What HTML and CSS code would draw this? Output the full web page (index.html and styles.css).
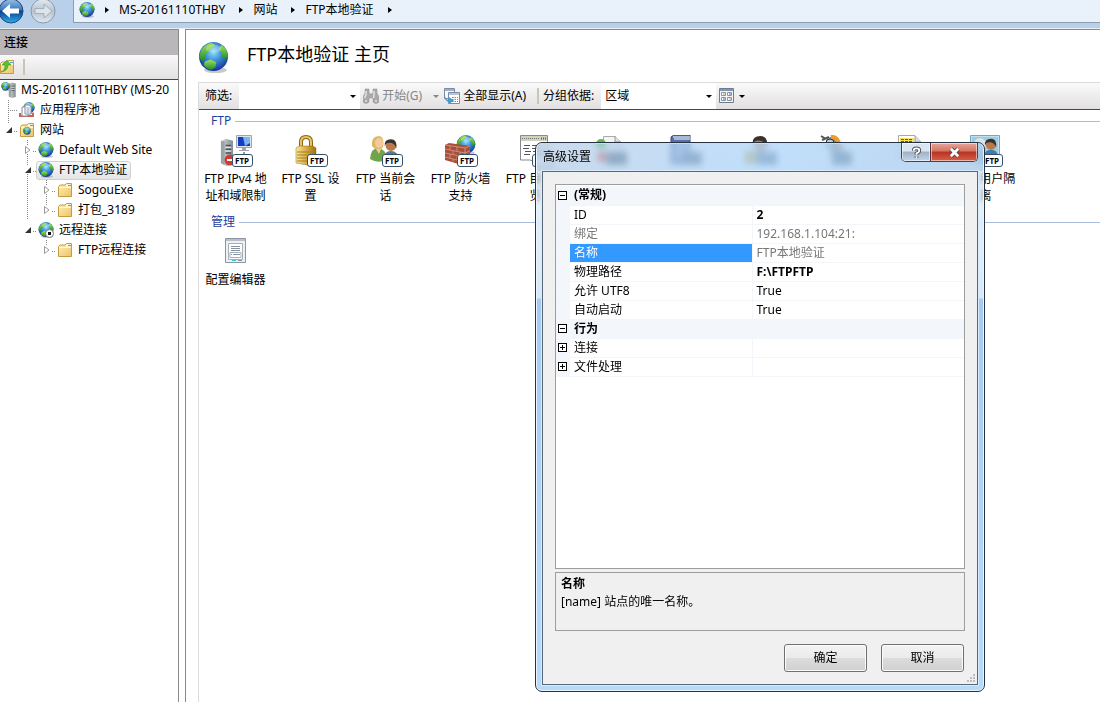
FILE: index.html
```html
<!DOCTYPE html>
<html lang="zh-CN">
<head>
    <meta charset="UTF-8">
    <meta name="viewport" content="width=device-width, initial-scale=1.0">
    <title>FTP本地验证 主页</title>
    <link rel="stylesheet" href="styles.css">
</head>
<body>
    <!-- Shared icons -->
    <svg class="sprite" aria-hidden="true">
        <defs>
            <radialGradient id="sea" cx="50%" cy="35%" r="65%">
                <stop offset="0" stop-color="#8fe0fa"/>
                <stop offset="0.45" stop-color="#3b8fd8"/>
                <stop offset="1" stop-color="#142f98"/>
            </radialGradient>
            <linearGradient id="leaf" x1="0" y1="0" x2="0" y2="1">
                <stop offset="0" stop-color="#a0e35a"/>
                <stop offset="1" stop-color="#1c8a2c"/>
            </linearGradient>
            <linearGradient id="paper" x1="0" y1="0" x2="1" y2="1">
                <stop offset="0" stop-color="#fff0b8"/>
                <stop offset="1" stop-color="#ecc466"/>
            </linearGradient>
            <linearGradient id="steel" x1="0" y1="0" x2="1" y2="0">
                <stop offset="0" stop-color="#d4dada"/>
                <stop offset="1" stop-color="#838c90"/>
            </linearGradient>
            <linearGradient id="gold" x1="0" y1="0" x2="1" y2="0">
                <stop offset="0" stop-color="#fbe9a0"/>
                <stop offset="0.6" stop-color="#d0a136"/>
                <stop offset="1" stop-color="#9c6f14"/>
            </linearGradient>
            <linearGradient id="blue-ball" x1="0" y1="0" x2="0" y2="1">
                <stop offset="0" stop-color="#9cc0e4"/>
                <stop offset="0.45" stop-color="#3a78bd"/>
                <stop offset="0.5" stop-color="#0d3f8e"/>
                <stop offset="1" stop-color="#27b2ee"/>
            </linearGradient>
            <linearGradient id="gray-ball" x1="0" y1="0" x2="0" y2="1">
                <stop offset="0" stop-color="#e4eaf1"/>
                <stop offset="0.5" stop-color="#b7c3d1"/>
                <stop offset="1" stop-color="#dfe9f3"/>
            </linearGradient>
        </defs>
        <symbol id="globe" viewBox="0 0 32 32">
            <ellipse cx="18" cy="29" rx="12" ry="3" fill="#777" opacity="0.4"/>
            <circle cx="16" cy="15" r="15" fill="url(#sea)"/>
            <path d="M3 9Q7 2 14 1L18 3L14 6L12 10L7 12L8 17L5 20L1 16Z" fill="url(#leaf)"/>
            <path d="M24 3Q31 8 31 15L28 18L24 15L25 11L21 8Z" fill="url(#leaf)"/>
            <path d="M7 20L13 18L19 21L18 26L14 29Q9 28 6 24Z" fill="url(#leaf)"/>
            <ellipse cx="16" cy="7" rx="8" ry="4" fill="#fff" opacity="0.25"/>
        </symbol>
        <symbol id="folder" viewBox="0 0 16 16">
            <path d="M1.500 14.500V4.500L3 3H8L9.500 1.500H14.500V14.500Z" fill="url(#paper)" stroke="#c69c42"/>
            <path d="M9 3.500H14" stroke="#fff" stroke-width="2"/>
            <path d="M11 3.500H14" stroke="#5ba4da"/>
            <path d="M2 5.500H14" stroke="#fff6d2"/>
        </symbol>
        <symbol id="server" viewBox="0 0 14 30">
            <path d="M1 3L7 1L14 3V28L7 30L1 27Z" fill="url(#steel)"/>
            <path d="M1 3L5 4V29L1 27Z" fill="#9aa3a6"/>
            <path d="M6 8H12M6 12H12M6 16H12" stroke="#4c5356" stroke-width="1.500"/>
            <path d="M6 10H12M6 14H12" stroke="#f4f6f6"/>
            <circle cx="9" cy="22" r="1" fill="#62dc5a"/>
        </symbol>
        <symbol id="open" viewBox="0 0 8 8"><path d="M7 1V7H1Z" fill="#333"/></symbol>
        <symbol id="closed" viewBox="0 0 8 8"><path d="M1.500 0.500V7.500L6 4Z" fill="#fff" stroke="#9a9a9a"/></symbol>
        <symbol id="person" viewBox="0 0 20 26">
            <path d="M1 24Q2 14 10 14Q18 14 19 24Q10 28 1 24Z"/>
            <circle cx="10" cy="8" r="6" fill="#b9794b"/>
            <path d="M3 9Q2 1 10 1Q17 1 16 11Q14 5 8 5Q4 5 3 9Z" fill="#38312d"/>
        </symbol>
    </svg>

    <!-- Address bar -->
    <header class="address-bar">
        <button class="nav-btn" aria-label="后退">
            <svg viewBox="0 0 26 26"><circle cx="13" cy="13" r="12" fill="url(#blue-ball)" stroke="#24467c"/><path d="M4 13L12 6V10.500H21V15.500H12V20Z" fill="#fff"/></svg>
        </button>
        <button class="nav-btn" aria-label="前进">
            <svg viewBox="0 0 26 26"><circle cx="13" cy="13" r="12" fill="url(#gray-ball)" stroke="#8d99a8"/><path d="M22 13L14 6V10.500H5V15.500H14V20Z" fill="#dce3ea" stroke="#a5afba"/></svg>
        </button>
        <nav class="breadcrumb">
            <svg class="icon16"><use href="#globe"/></svg>
            <span class="crumb-arrow"></span>
            <a href="#">MS-20161110THBY</a>
            <span class="crumb-arrow"></span>
            <a href="#">网站</a>
            <span class="crumb-arrow"></span>
            <a href="#">FTP本地验证</a>
            <span class="crumb-arrow"></span>
        </nav>
    </header>

    <div class="workspace">
        <!-- Connections tree -->
        <aside class="sidebar">
            <h2>连接</h2>
            <div class="side-tools">
                <button aria-label="上一级">
                    <svg class="icon16"><use href="#folder"/><path d="M2 13Q6 12 6 6H3L8 1L12 6H9Q9 12 2 13Z" fill="#5ac22e" stroke="#2e8a1c" stroke-width="0.500"/></svg>
                </button>
                <span class="sep"></span>
            </div>
            <ul class="tree">
                <li>
                    <div class="node root">
                        <a href="#"><svg class="icon16"><use href="#server" x="6" y="0" width="10" height="16"/><use href="#globe" x="0" y="0" width="9" height="9"/></svg>MS-20161110THBY (MS-20</a>
                    </div>
                    <ul class="level1">
                        <li>
                            <div class="node">
                                <span class="dots"></span>
                                <a href="#"><svg class="icon16"><use href="#globe" x="4" y="0" width="12" height="12"/><path d="M1 11V14H14V11" fill="none" stroke="#d06050" stroke-width="2"/><path d="M3 5H9V14H3Z" fill="#fff" stroke="#8290a8"/><path d="M6 3H10L12 5V12H6Z" fill="#fff" stroke="#8290a8"/><path d="M7.500 6H10.500M7.500 8H10.500M7.500 10H10.500" stroke="#8290a8"/></svg>应用程序池</a>
                            </div>
                        </li>
                        <li>
                            <div class="node">
                                <button class="twist" aria-label="折叠"><svg><use href="#open"/></svg></button>
                                <a href="#"><svg class="icon16"><use href="#folder"/><use href="#globe" x="4" y="5" width="8" height="8"/></svg>网站</a>
                            </div>
                            <ul class="level2">
                                <li>
                                    <div class="node">
                                        <button class="twist" aria-label="展开"><svg><use href="#closed"/></svg></button>
                                        <a href="#"><svg class="icon16"><use href="#globe"/></svg>Default Web Site</a>
                                    </div>
                                </li>
                                <li>
                                    <div class="node">
                                        <button class="twist" aria-label="折叠"><svg><use href="#open"/></svg></button>
                                        <a href="#" class="selected"><svg class="icon16"><use href="#globe"/></svg>FTP本地验证</a>
                                    </div>
                                    <ul class="level3">
                                        <li>
                                            <div class="node">
                                                <button class="twist" aria-label="展开"><svg><use href="#closed"/></svg></button>
                                                <a href="#"><svg class="icon16"><use href="#folder"/></svg>SogouExe</a>
                                            </div>
                                        </li>
                                        <li>
                                            <div class="node">
                                                <button class="twist" aria-label="展开"><svg><use href="#closed"/></svg></button>
                                                <a href="#"><svg class="icon16"><use href="#folder"/></svg>打包_3189</a>
                                            </div>
                                        </li>
                                    </ul>
                                </li>
                                <li>
                                    <div class="node">
                                        <button class="twist" aria-label="折叠"><svg><use href="#open"/></svg></button>
                                        <a href="#"><svg class="icon16"><use href="#globe"/><circle cx="11.500" cy="11.500" r="4" fill="#fff" stroke="#777"/><path d="M10 10H13V13H10Z" fill="#111"/></svg>远程连接</a>
                                    </div>
                                    <ul class="level3">
                                        <li>
                                            <div class="node">
                                                <button class="twist" aria-label="展开"><svg><use href="#closed"/></svg></button>
                                                <a href="#"><svg class="icon16"><use href="#folder"/></svg>FTP远程连接</a>
                                            </div>
                                        </li>
                                    </ul>
                                </li>
                            </ul>
                        </li>
                    </ul>
                </li>
            </ul>
        </aside>

        <!-- Home page of the site -->
        <main class="content">
            <div class="page-title">
                <svg class="icon30"><use href="#globe"/></svg>
                <h1>FTP本地验证 主页</h1>
            </div>
            <div class="panel">
                <div class="toolbar">
                    <label for="filter">筛选:</label>
                    <div class="combo filter"><input type="text" id="filter"><span class="arrow"></span></div>
                    <button class="tool disabled" disabled>
                        <svg class="icon16"><path d="M2 1H6V4L7 6H9L10 4V1H14V5L16 9V14Q13 17 10 14V10H6V14Q3 17 0 14V9L2 5Z" fill="#aaa" stroke="#8e8e8e" stroke-width="0.500"/><path d="M3 3V7L1.500 10M11 3V7L10.500 10M2 13H4M12 13H14" fill="none" stroke="#e2e2e2" stroke-width="1.500"/></svg>
                        开始(G)
                        <span class="arrow"></span>
                    </button>
                    <button class="tool show-all">
                        <svg class="icon16"><path d="M0.500 0.500H10.500V10.500H0.500Z" fill="#f6f8fb" stroke="#7d8ba0"/><path d="M1 2H10" stroke="#9ab0cc" stroke-width="2"/><path d="M4.500 4.500H15.500V15.500H4.500Z" fill="#fff" stroke="#7d8ba0"/><path d="M5 6H15" stroke="#b8c6da" stroke-width="2"/><path d="M8 9.500H14M8 11.500H14M8 13.500H14" stroke="#6b88b4" stroke-dasharray="1.500 1"/><path d="M1 7Q1 12 5 12V9L10 12.500L5 16V14Q0 13 1 7Z" fill="#31a1e0"/></svg>
                        全部显示(A)
                    </button>
                    <span class="sep"></span>
                    <label for="group">分组依据:</label>
                    <div class="combo group-by"><select id="group"><option>区域</option></select><span class="arrow"></span></div>
                    <button class="tool" aria-label="视图">
                        <svg class="icon16"><path d="M0.500 0.500H14.500V14.500H0.500Z" fill="#f3f5f8" stroke="#6f7c90"/><path d="M1 2H14" stroke="#8795ac" stroke-width="2"/><path d="M2.500 4.500H6.500V7.500H2.500ZM8.500 4.500H12.500V7.500H8.500ZM2.500 9.500H6.500V12.500H2.500ZM8.500 9.500H12.500V12.500H8.500Z" fill="#fff" stroke="#8795ac"/><path d="M4 6H6M10 11H12" stroke="#d99a28"/><path d="M10 6H12M4 11H6" stroke="#4965bd"/></svg>
                        <span class="arrow"></span>
                    </button>
                </div>

                <section class="group">
                    <h3>FTP</h3>
                    <div class="items">
                        <a href="#" class="item">
                            <span class="pic"><svg><use href="#server" x="0" y="3" width="13" height="28"/><path d="M16.500 0.500H31.500V12.500H16.500Z" fill="#dfe3e8" stroke="#9ba4b0"/><path d="M18 2H30V11H18Z" fill="#183bc4"/><path d="M23 2H30V8L25 11Z" fill="#7ab4f4"/><path d="M22 13H26V15H29V16H19V15H22Z" fill="#9da6ad"/><path d="M24 17V20" stroke="#333"/><circle cx="10" cy="25" r="5.500" fill="#d23a32"/><path d="M7 25H13" stroke="#fff" stroke-width="2"/></svg><span class="ftp">FTP</span></span>
                            FTP IPv4 地址和域限制
                        </a>
                        <a href="#" class="item">
                            <span class="pic"><svg><path d="M6 15V7Q6 2 11 2Q16 2 16 7V15" fill="none" stroke="#8a6318" stroke-width="4"/><path d="M6 15V7Q6 2 11 2Q16 2 16 7V15" fill="none" stroke="#e5c768" stroke-width="2"/><path d="M1 13L4 11H18L21 13V28L18 31L1 28Z" fill="url(#gold)" stroke="#93691a" stroke-width="0.500"/><path d="M2 17H20M2 20H20M2 23H20M2 26H20" stroke="#a87c22"/></svg><span class="ftp">FTP</span></span>
                            FTP SSL 设置
                        </a>
                        <a href="#" class="item">
                            <span class="pic"><svg><use href="#person" x="12" y="3" width="18" height="24" fill="#57799b"/><path d="M0 24Q1 13 8 13Q17 14 16 25Q8 29 0 24Z" fill="#6fa34c"/><path d="M2 11Q1 1 9 1Q15 2 13 12L9 16L4 13Z" fill="#dcb95e"/><ellipse cx="9" cy="8" rx="4" ry="5" fill="#f2c9a0"/><path d="M6 14L9 19L11 14Z" fill="#f2c9a0"/></svg><span class="ftp">FTP</span></span>
                            FTP 当前会话
                        </a>
                        <a href="#" class="item">
                            <span class="pic"><svg><use href="#globe" x="11" y="0" width="20" height="20"/><path d="M0 10L4 8L25 11V30L20 31L0 25Z" fill="#a9503c"/><path d="M0 10L20 13L25 11M20 13V31M0 14L20 18L25 16M0 18L20 22L25 20M0 22L20 27L25 25M5 11V15M12 12V16M8 16V20M15 17V21M5 19V23M12 21V25M8 24V27" fill="none" stroke="#d89a84" stroke-width="0.800"/></svg><span class="ftp">FTP</span></span>
                            FTP 防火墙支持
                        </a>
                        <a href="#" class="item">
                            <span class="pic"><svg><path d="M0.500 0.500H27.500V25L22 29L10 25H0.500Z" fill="#fff" stroke="#858b90"/><path d="M1 3.500H27" stroke="#d0d2bd" stroke-width="5"/><path d="M2 3.500H20" stroke="#6f7478" stroke-dasharray="1 1"/><path d="M21 3.500H26" stroke="#3a7b35" stroke-width="2" stroke-dasharray="1 1"/><path d="M4 10.500H10M12 10.500H20M3 13.500H9M12 13.500H19M5 16.500H11M13 16.500H20M4 19.500H10" stroke="#555"/></svg><span class="ftp"></span></span>
                            FTP 目录浏览
                        </a>
                        <a href="#" class="item" aria-label="FTP 请求筛选">
                            <span class="pic"><svg><path d="M8.500 1.500H20L26 7V29H8.500Z" fill="#f5f5f5" stroke="#aaa"/><path d="M20 1V7H26" fill="#ddd" stroke="#999"/><circle cx="6" cy="9" r="5" fill="#5cba53"/><circle cx="7" cy="22" r="5" fill="#e2524a"/><path d="M12 17H32V30H12Z" fill="#4d6478"/></svg></span>
                        </a>
                        <a href="#" class="item" aria-label="FTP 日志">
                            <span class="pic"><svg><path d="M1 2L4 0H20V26L17 29H1Z" fill="#5571a8" stroke="#304c88"/><path d="M4 4H20M3 2H20" stroke="#fff"/><path d="M5 7H18V24H5Z" fill="#8ba2c8"/><path d="M12 17H32V30H12Z" fill="#4d6478"/></svg></span>
                        </a>
                        <a href="#" class="item" aria-label="FTP 身份验证">
                            <span class="pic"><svg><use href="#person" x="4" y="0" width="23" height="29" fill="#38414e"/><path d="M0 16H12V29H0Z" fill="#c5a028"/><path d="M12 17H32V30H12Z" fill="#4d6478"/></svg></span>
                        </a>
                        <a href="#" class="item" aria-label="FTP 授权规则">
                            <span class="pic"><svg><path d="M6 5Q10 0 16 2L22 10L26 25L18 29L10 16Z" fill="#8c8580"/><path d="M11 2Q18 1 20 12" fill="none" stroke="#ef9b2d" stroke-width="4"/><path d="M1 1L6 4M2 5L9 2" stroke="#555" stroke-width="2"/><circle cx="10" cy="8" r="4" fill="#b5d4e6" stroke="#333"/><path d="M12 17H32V30H12Z" fill="#4d6478"/></svg></span>
                        </a>
                        <a href="#" class="item" aria-label="FTP 消息">
                            <span class="pic"><svg><path d="M3.500 0.500H20L26 7V22H3.500Z" fill="#fff" stroke="#aaa"/><path d="M20 1V7H26" fill="#ddd" stroke="#999"/><path d="M5 3H19V8H5Z" fill="#f6e352"/><path d="M6 4.500H18M6 6.500H18" stroke="#555" stroke-dasharray="3 1"/></svg></span>
                        </a>
                        <a href="#" class="item">
                            <span class="pic"><svg><path d="M0.500 0.500H29.500V27.500H0.500Z" fill="#c3dfec" stroke="#76a8bd"/><path d="M2 2H28V25H2Z" fill="#9fcbe0"/><circle cx="10" cy="9" r="6" fill="#d9e4e6"/><use href="#person" x="12" y="3" width="18" height="22" fill="#3d7dae"/></svg><span class="ftp">FTP</span></span>
                            FTP 用户隔离
                        </a>
                    </div>
                </section>

                <section class="group">
                    <h3>管理</h3>
                    <div class="items">
                        <a href="#" class="item">
                            <span class="pic small"><svg><path d="M0.500 0.500H20.500V24.500H0.500Z" fill="#eef0f2" stroke="#8a96a2"/><path d="M1 2H20" stroke="#b8c1ca" stroke-width="2"/><path d="M3.500 5.500H17.500V21.500H3.500Z" fill="#fff" stroke="#a6b0ba"/><path d="M6 8.500H15M6 10.500H15M6 12.500H15" stroke="#8793a0"/><path d="M5 14.500H16V19.500H5Z" fill="none" stroke="#a6b0ba"/><path d="M8 16.500H15" stroke="#8793a0"/><path d="M6 16.500H7M7 22.500H11" stroke="#2cc3e4"/><path d="M13 22.500H17" stroke="#8793a0"/></svg></span>
                            配置编辑器
                        </a>
                    </div>
                </section>
            </div>
        </main>
    </div>

    <!-- Advanced settings window -->
    <div class="dialog" role="dialog" aria-labelledby="dialog-title">
        <div class="title-bar">
            <h2 id="dialog-title">高级设置</h2>
            <div class="caption-btns">
                <button class="help" aria-label="帮助"><svg viewBox="0 0 14 14"><path d="M4 5Q4 2.500 7 2.500Q10 2.500 10 5Q10 6.500 7 8V9.500M7 11V13" fill="none" stroke="#4a5361" stroke-width="4"/><path d="M4 5Q4 2.500 7 2.500Q10 2.500 10 5Q10 6.500 7 8V9.500M7 11V13" fill="none" stroke="#fff" stroke-width="2"/></svg></button>
                <button class="close" aria-label="关闭"><svg viewBox="0 0 14 14"><path d="M3 3L11 11M11 3L3 11" stroke="#5a4648" stroke-width="5"/><path d="M3 3L11 11M11 3L3 11" stroke="#fff" stroke-width="3"/></svg></button>
            </div>
        </div>
        <div class="dialog-body">
            <div class="prop-grid">
                <table>
                    <colgroup>
                        <col class="col-gutter">
                        <col class="col-name">
                        <col>
                    </colgroup>
                    <tr class="category"><td class="gutter"><button class="box minus" aria-label="折叠"></button></td><th colspan="2">(常规)</th></tr>
                    <tr><td class="gutter"></td><td>ID</td><td class="value bold">2</td></tr>
                    <tr class="readonly"><td class="gutter"></td><td>绑定</td><td class="value">192.168.1.104:21:</td></tr>
                    <tr class="readonly current"><td class="gutter"></td><td>名称</td><td class="value">FTP本地验证</td></tr>
                    <tr><td class="gutter"></td><td>物理路径</td><td class="value bold">F:\FTPFTP</td></tr>
                    <tr><td class="gutter"></td><td>允许 UTF8</td><td class="value">True</td></tr>
                    <tr><td class="gutter"></td><td>自动启动</td><td class="value">True</td></tr>
                    <tr class="category"><td class="gutter"><button class="box minus" aria-label="折叠"></button></td><th colspan="2">行为</th></tr>
                    <tr><td class="gutter"><button class="box plus" aria-label="展开"></button></td><td>连接</td><td class="value"></td></tr>
                    <tr><td class="gutter"><button class="box plus" aria-label="展开"></button></td><td>文件处理</td><td class="value"></td></tr>
                </table>
            </div>
            <div class="description">
                <strong>名称</strong>
                <p>[name] 站点的唯一名称。</p>
            </div>
            <div class="actions">
                <button>确定</button>
                <button>取消</button>
            </div>
            <svg class="grip" viewBox="0 0 9 9"><path d="M6 0H8V2H6ZM3 3H5V5H3ZM6 3H8V5H6ZM0 6H2V8H0ZM3 6H5V8H3ZM6 6H8V8H6Z" fill="#bdbdbd"/></svg>
        </div>
    </div>
</body>
</html>
```
FILE: styles.css
```css
* {
    box-sizing: border-box;
}

body {
    margin: 0;
    height: 100vh;
    display: flex;
    flex-direction: column;
    overflow: hidden;
    position: relative;
    background-color: #fff;
    color: #000;
    font-family: "Noto Sans", "Noto Sans CJK SC", sans-serif;
    font-size: 12px;
    line-height: 16px;
}

h1, h2, h3, p, ul {
    margin: 0;
    padding: 0;
    font-size: 12px;
    font-weight: normal;
}

ul {
    list-style: none;
}

a {
    color: inherit;
    text-decoration: none;
}

button, input, select {
    font: inherit;
    color: inherit;
    margin: 0;
    padding: 0;
    border: none;
    background: none;
}

.sprite {
    position: absolute;
    width: 0;
    height: 0;
}

.icon16 {
    width: 16px;
    height: 16px;
    flex: none;
}

.icon30 {
    width: 31px;
    height: 31px;
    flex: none;
}

.sep {
    width: 2px;
    height: 16px;
    background-color: #c9c7b2;
}

.arrow {
    border: 3px solid transparent;
    border-top-color: currentColor;
    border-bottom: none;
}

/* Address bar */
.address-bar {
    display: flex;
    flex: none;
    height: 29px;
    background-color: #b9d0ea;
    border-bottom: 1px solid #e9eef4;
}

.nav-btn {
    width: 26px;
    height: 26px;
    margin: -2px 6px 0 -2px;
}

.nav-btn + .nav-btn {
    margin-left: 0;
}

.nav-btn svg {
    display: block;
}

.breadcrumb {
    display: flex;
    flex: 1;
    align-items: center;
    height: 23px;
    margin-left: 11px;
    padding: 0 5px 3px;
    background-color: #e9f2fb;
    border-left: 1px solid #8c9bae;
    border-bottom: 1px solid #8c9bae;
}

.crumb-arrow {
    border: 3px solid transparent;
    border-left: 4px solid #000;
    border-right: none;
    margin: 0 10px 0 14px;
}

.breadcrumb .icon16 + .crumb-arrow {
    margin-left: 10px;
}

/* Layout */
.workspace {
    display: flex;
    flex: 1;
    gap: 6px;
    min-height: 0;
}

.sidebar {
    flex: none;
    width: 179px;
    overflow: hidden;
    border-top: 1px solid #8a8a8a;
    border-right: 1px solid #8a8a8a;
}

.sidebar h2 {
    height: 25px;
    padding: 5px 4px;
    background-color: #bab7ba;
    font-weight: 500;
}

.side-tools {
    display: flex;
    align-items: center;
    gap: 8px;
    height: 25px;
    background: linear-gradient(#f8f8f8, #e3e1e2);
    border-bottom: 1px solid #44446a;
}

.side-tools button {
    display: flex;
    margin-left: -1px;
}

/* Tree */
.node {
    display: flex;
    align-items: center;
    height: 20px;
    padding-left: 4px;
}

.level2 .node {
    padding-left: 23px;
}

.level3 .node {
    padding-left: 42px;
}

.node a {
    display: flex;
    align-items: center;
    gap: 5px;
    height: 19px;
    padding: 0 3px 0 1px;
    border: 1px solid transparent;
    border-radius: 3px;
    white-space: nowrap;
}

.node.root {
    padding-left: 0;
}

.node.root a {
    gap: 4px;
    padding-left: 0;
}

.node a.selected {
    background: linear-gradient(#f8f8f8, #e5e5e5);
    border-color: #d0d0d0;
}

.twist {
    width: 13px;
    height: 8px;
    display: flex;
}

.twist::after {
    content: "";
    width: 3px;
    height: 5px;
    margin-left: 1px;
    border-bottom: 1px dotted #888;
}

.twist svg {
    width: 8px;
    height: 8px;
    margin-left: 1px;
    background-color: #fff;
}

.dots {
    width: 9px;
    margin-left: 4px;
    border-top: 1px dotted #888;
}

.level1, .level2, .level3 {
    background: repeating-linear-gradient(#888 0 1px, transparent 1px 2px) no-repeat;
}

.level1 {
    background-size: 1px 24px;
    background-position: 8px 0;
}

.level2 {
    background-size: 1px calc(100% - 40px);
    background-position: 27px 0;
}

.level3 {
    background-size: 1px calc(100% - 14px);
    background-position: 46px 0;
}

/* Content */
.content {
    display: flex;
    flex: 1;
    flex-direction: column;
    min-width: 0;
    padding-left: 12px;
    border-top: 1px solid #8a8a8a;
    border-left: 1px solid #8a8a8a;
}

.page-title {
    display: flex;
    gap: 18px;
    height: 52px;
    padding-top: 12px;
}

.page-title h1 {
    font-size: 18px;
    line-height: 24px;
}

.panel {
    flex: 1;
    border-left: 1px solid #dcdcdc;
}

.toolbar {
    display: flex;
    align-items: center;
    height: 28px;
    padding-left: 6px;
    background: linear-gradient(#fafafa, #e2e0e1);
    border-top: 1px solid #dcdcdc;
    border-bottom: 1px solid #44446a;
    white-space: nowrap;
}

.combo {
    display: flex;
    align-items: center;
    align-self: stretch;
    margin: 0 3px 0 7px;
    padding: 0 4px;
    background-color: #fff;
}

.combo input, .combo select {
    flex: 1;
    width: 0;
    outline: none;
    appearance: none;
}

.filter {
    width: 121px;
}

.group-by {
    width: 115px;
}

.tool {
    display: flex;
    align-items: center;
    gap: 3px;
}

.tool .arrow {
    margin-left: 1px;
}

.disabled {
    color: #868686;
}

.disabled .arrow {
    margin-left: 8px;
}

.show-all {
    margin: 0 11px 0 5px;
}

.toolbar .sep {
    margin-right: 4px;
}

.group {
    padding-left: 12px;
}

.group h3 {
    display: flex;
    align-items: center;
    gap: 4px;
    height: 22px;
    color: #1c3f9b;
}

.group h3::after {
    content: "";
    flex: 1;
    height: 1px;
    background-color: #a9bbdf;
}

.items {
    display: flex;
    margin-left: -13px;
    padding-bottom: 7px;
}

.item {
    flex: none;
    width: 75px;
    padding: 3px 5px 0;
    line-height: 17px;
    text-align: center;
}

.pic {
    display: block;
    position: relative;
    width: 32px;
    height: 32px;
    margin: 0 auto 3px;
}

.pic svg {
    display: block;
    width: 32px;
    height: 32px;
}

.pic.small {
    width: 22px;
    height: 26px;
    margin-top: 2px;
    margin-bottom: 7px;
}

.pic.small svg {
    width: 22px;
    height: 26px;
}

.ftp {
    position: absolute;
    right: -1px;
    bottom: 0;
    width: 21px;
    height: 13px;
    border: 1px solid #34536a;
    border-radius: 3px;
    background-color: #fff;
    font-size: 8px;
    font-weight: bold;
    line-height: 11px;
}

/* Dialog */
.dialog {
    position: absolute;
    left: 535px;
    top: 142px;
    width: 450px;
    height: 550px;
    display: flex;
    flex-direction: column;
    padding: 0 6px 6px;
    border: 1px solid #26323f;
    border-radius: 7px;
    background:
        linear-gradient(#d6e6f566 0, #c6dcf2aa 155px, #a5cbf0 156px, #b7dafa) no-repeat;
    box-shadow: inset 0 0 0 1px #eaf5ff;
    backdrop-filter: blur(3px);
}

.title-bar {
    display: flex;
    flex: none;
    justify-content: space-between;
    height: 28px;
    margin: 0 -5px;
    padding: 0 5px 0 6px;
    background: linear-gradient(90deg, #96b4d466, #a4d0fb99 50%, #94bce588);
    border-radius: 6px 6px 0 0;
}

.title-bar h2 {
    line-height: 28px;
}

.caption-btns {
    display: flex;
    height: 19px;
    border: 1px solid #3b4655;
    border-top: none;
    border-radius: 0 0 5px 5px;
    overflow: hidden;
}

.caption-btns button {
    display: flex;
    align-items: center;
    justify-content: center;
    box-shadow: inset 0 0 0 1px #ffffff88;
}

.caption-btns svg {
    width: 13px;
    height: 13px;
}

.help {
    width: 28px;
    background: linear-gradient(#dbe5ef 45%, #9fb1c5 50%, #c3d5e7);
}

.caption-btns .close {
    width: 47px;
    background: linear-gradient(#e6a79c 0, #d47363 45%, #b83321 50%, #d6604b);
    border-left: 1px solid #54303a;
}

.dialog-body {
    display: flex;
    flex: 1;
    flex-direction: column;
    position: relative;
    padding: 12px;
    background-color: #f0f0f0;
    border: 1px solid #566777;
    box-shadow: 0 0 0 1px #d8ecff;
}

.prop-grid {
    flex: 1;
    padding-top: 1px;
    background-color: #fff;
    border: 1px solid #9d9d9d;
}

.prop-grid table {
    width: 100%;
    table-layout: fixed;
    border-collapse: collapse;
}

.col-gutter {
    width: 14px;
}

.col-name {
    width: 182px;
}

.prop-grid td, .prop-grid th {
    height: 19px;
    padding: 0 4px;
    line-height: 18px;
    text-align: left;
    border-bottom: 1px solid #f2f5fa;
}

.prop-grid td:nth-child(2) {
    border-right: 1px solid #f2f5fa;
}

.prop-grid .gutter {
    padding: 0 0 0 2px;
    background-color: #f3f6fb;
}

.prop-grid .category {
    background-color: #f3f6fb;
}

.bold {
    font-weight: bold;
}

.readonly {
    color: #777;
}

.prop-grid .current td:nth-child(2) {
    background-color: #3399ff;
    color: #fff;
}

.box {
    display: block;
    width: 9px;
    height: 9px;
    border: 1px solid #000;
    background: linear-gradient(#000, #000) center / 5px 1px no-repeat #fff;
}

.plus {
    background: linear-gradient(#000, #000) center / 5px 1px no-repeat, linear-gradient(#000, #000) center / 1px 5px no-repeat #fff;
}

.description {
    height: 59px;
    margin-top: 3px;
    padding: 2px 5px;
    border: 1px solid #9d9d9d;
    line-height: 18px;
}

.actions {
    display: flex;
    justify-content: flex-end;
    gap: 14px;
    margin: 13px 1px 0 0;
}

.actions button {
    width: 83px;
    height: 28px;
    border: 1px solid #707070;
    border-radius: 3px;
    background: linear-gradient(#f3f3f3, #ebebeb 49%, #dddddd 50%, #cfcfcf);
    box-shadow: inset 0 0 0 1px #fbfbfb;
}

.grip {
    position: absolute;
    right: 1px;
    bottom: 1px;
    width: 9px;
    height: 9px;
}
```
